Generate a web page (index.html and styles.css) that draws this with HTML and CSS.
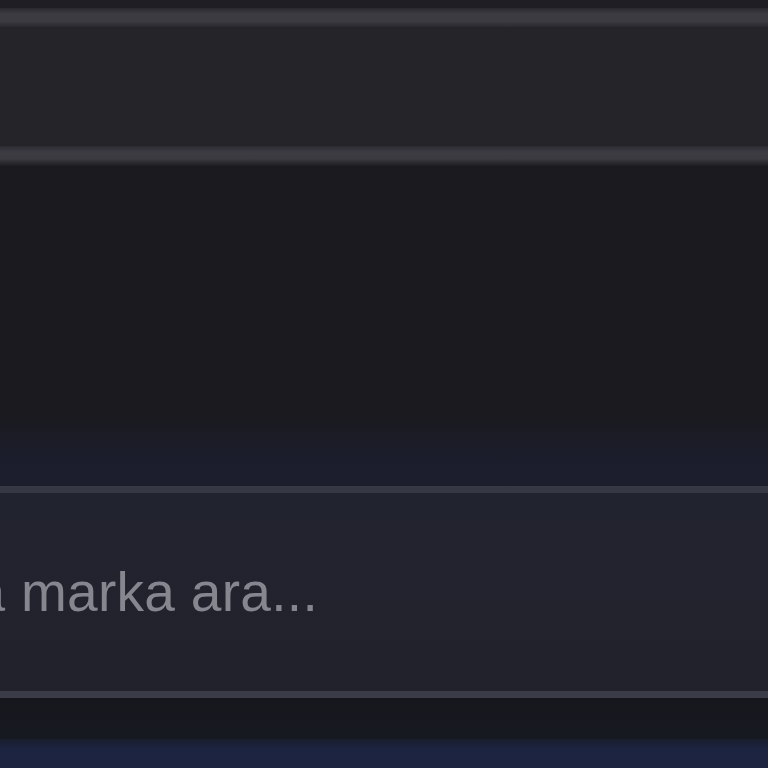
FILE: index.html
```html
<!DOCTYPE html>
<html lang="tr">
<head>
    <meta charset="UTF-8">
    <meta name="viewport" content="width=device-width, initial-scale=1.0">
    <title>Arama</title>
    <link rel="stylesheet" href="styles.css">
</head>
<body>

    <div class="topbar"></div>

    <div class="toolbar">
        <div class="toolbar-line"></div>
        <div class="toolbar-body"></div>
        <div class="toolbar-line"></div>
    </div>

    <div class="content"></div>

    <div class="search">
        <div class="search-field">
            <input type="text" placeholder="Ürün veya marka ara...">
        </div>
    </div>

    <div class="footer">
        <div class="footer-dark"></div>
        <div class="footer-nav"></div>
    </div>

</body>
</html>
```

FILE: styles.css
```css
html, body {
    margin: 0;
    padding: 0;
}
body {
    font-family: "Liberation Sans", Arial, sans-serif;
    background-color: #1a1a1f;
    width: 768px;
    height: 768px;
    overflow: hidden;
}
.topbar {
    height: 8px;
    background-color: #1f1e24;
}
.toolbar-line {
    height: 19px;
    background: linear-gradient(#2a292f, #3c3b41 30%, #3c3b41 70%, #2a292f);
}
.toolbar-body {
    height: 119px;
    background-color: #252429;
}
.toolbar .toolbar-line:last-child {
    height: 20px;
    background: linear-gradient(#2c2b31, #3d3c42 30%, #3b3a40 65%, #1c1c21);
}
.content {
    height: 320px;
    background: linear-gradient(#1a1a1f 0%, #1a1a1f 78%, #1b1d2c 92%, #1c1e2c 100%);
}
.search {
    border-top: 7px solid #363944;
    border-bottom: 7px solid #3a3d47;
    background: linear-gradient(#21232e, #22222c);
    height: 198px;
    display: flex;
    align-items: center;
    overflow: hidden;
}
.search-field {
    margin-left: -248px;
    flex: none;
    width: 1000px;
}
.search-field input {
    width: 100%;
    border: none;
    outline: none;
    background: transparent;
    padding: 0;
    font-family: "Liberation Sans", Arial, sans-serif;
    font-size: 55px;
    letter-spacing: 0.3px;
    color: #d0d1d6;
}
.search-field input::placeholder {
    color: #85868e;
}
.footer-dark {
    height: 41px;
    background: linear-gradient(#15171d, #171920);
}
.footer-nav {
    height: 30px;
    background: linear-gradient(#191d2d, #1c2441 35%, #1c2440);
}
```
